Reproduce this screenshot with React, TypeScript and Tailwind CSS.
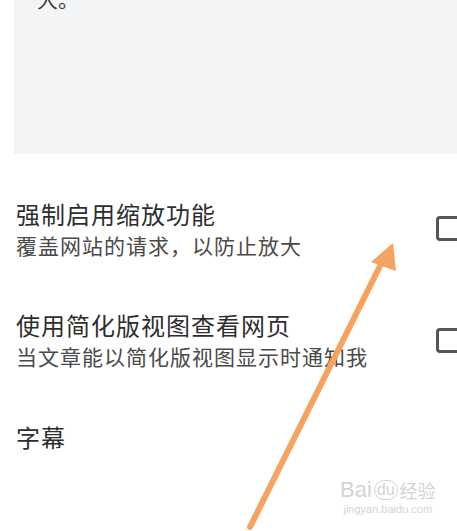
export default function App() {
  const cjk = { fontFamily: '"Noto Sans CJK SC", "Noto Sans", sans-serif' };

  return (
    <div className="relative h-[531px] w-[457px] overflow-hidden bg-white" style={cjk}>
      {/* top info box, scrolled partly out of view */}
      <div className="ml-[14px] h-[154px] overflow-hidden bg-[#f3f4f6]">
        <p className="-mt-[17px] pl-[23px] text-[21px] leading-[30px] text-[#333]">大。</p>
      </div>

      <div className="flex w-[461px] items-start justify-between pl-4 pt-[44px]">
        <div>
          <p className="text-[24px] leading-[32px] tracking-[1px] text-[#2e2e2e]">强制启用缩放功能</p>
          <p className="text-[21px] leading-[30px] tracking-[1px] text-[#4a4a4a]">覆盖网站的请求，以防止放大</p>
        </div>
        <div className="mt-[18px] h-[25px] w-[25px] rounded-[4px] border-[3px] border-[#555]" />
      </div>

      <div className="flex w-[461px] items-start justify-between pl-4 pt-[49px]">
        <div>
          <p className="text-[24px] leading-[32px] tracking-[1px] text-[#2e2e2e]">使用简化版视图查看网页</p>
          <p className="text-[21px] leading-[30px] tracking-[1px] text-[#4a4a4a]">当文章能以简化版视图显示时通知我</p>
        </div>
        <div className="mt-[19px] h-[25px] w-[25px] rounded-[4px] border-[3px] border-[#555]" />
      </div>

      <p className="pl-4 pt-[50px] text-[24px] leading-[32px] tracking-[1px] text-[#2e2e2e]">字幕</p>

      {/* watermark */}
      <div className="absolute left-[340px] top-[478px] flex flex-col items-center text-[#d4d4d4]">
        <div className="flex items-center gap-[2px] text-[22px] leading-[24px]" style={{ fontFamily: '"Liberation Sans", sans-serif' }}>
          <span>Bai</span>
          <span className="rounded-full border border-[#d4d4d4] px-[2px] text-[16px] leading-[18px]">du</span>
          <span className="text-[18px]" style={cjk}>经验</span>
        </div>
        <span className="text-[11px] leading-[14px]" style={{ fontFamily: '"Liberation Sans", sans-serif' }}>jingyan.baidu.com</span>
      </div>

      {/* orange annotation arrow */}
      <svg className="pointer-events-none absolute left-0 top-0" width="457" height="531" viewBox="0 0 457 531">
        <line x1="250" y1="527" x2="382" y2="262" stroke="#f6a260" strokeWidth="6" strokeLinecap="round" />
        <polygon points="393,243 396,271 371,262" fill="#f6a260" />
      </svg>
    </div>
  );
}
